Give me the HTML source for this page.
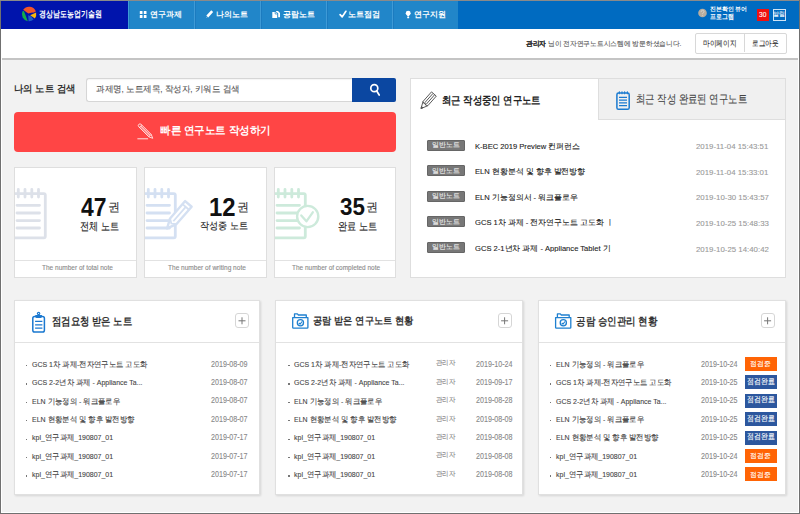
<!DOCTYPE html>
<html><head><meta charset="utf-8">
<style>
*{margin:0;padding:0;box-sizing:border-box}
html,body{width:800px;height:514px;overflow:hidden;background:#f2f2f2;font-family:"Liberation Sans",sans-serif;color:#333}
.a{position:absolute;white-space:nowrap;line-height:1}
#frame-l{left:0;top:0;width:1px;height:514px;background:#707070}
#frame-t{left:0;top:0;width:800px;height:1px;background:#8a8a8a}
#frame-r{left:799px;top:0;width:1px;height:514px;background:#707070}
#frame-b{left:0;top:513px;width:800px;height:1px;background:#707070}
#in-l{left:1px;top:29px;width:1px;height:484px;background:#fff}
#in-r{left:798px;top:29px;width:1px;height:484px;background:#fff}
#in-b{left:1px;top:512px;width:798px;height:1px;background:#fff}
#hdr{left:1px;top:1px;width:798px;height:28px;background:#006bc1}
#logo{left:1px;top:1px;width:127px;height:28px;background:#0014ac}
#nav{left:128px;top:1px;width:330px;height:28px;background:#2186c9}
.nv{position:absolute;top:0;height:28px;width:66px;border-left:1px solid #3e9ad6}
.nv:after{content:"";position:absolute;left:0;top:0;width:1px;height:28px;background:#1c7bbf}
#sub{left:1px;top:29px;width:797px;height:29px;background:#fff}
#subline{left:1px;top:58px;width:797px;height:2px;background:#c4c4c4}
.btngrp{left:694.5px;top:33px;width:92px;height:20.5px;border:1px solid #d8d8d8;border-radius:2px;background:#fff}
.search{left:86px;top:78px;width:267px;height:23.5px;background:#fff;border:1px solid #d6d6d6;border-right:none;border-radius:3px 0 0 3px;box-shadow:inset 0 1px 1px rgba(0,0,0,.04)}
.sbtn{left:352px;top:78px;width:44px;height:23.5px;background:#0b47a1;border-radius:0 2px 2px 0}
.redbtn{left:14px;top:111.5px;width:382px;height:40px;background:#ff4545;border-radius:4px}
.card{top:167px;width:123px;height:111px;background:#fff;border:1px solid #dedede;overflow:hidden}
.card .ftl{position:absolute;left:0;top:92px;width:121px;height:1px;background:#e2e2e2}
.rp{left:410px;top:78px;width:376px;height:200px;background:#fff;border:1px solid #dedede}
.tab2{left:598px;top:78px;width:188px;height:42px;background:#f0f0f0;border:1px solid #dedede}
.badge{position:absolute;left:427px;width:38px;height:11px;background:#777;border:1px solid #666;border-radius:1px}
.bp{top:300px;width:245px;height:195px;background:#fff;border:1px solid #e0e0e0;box-shadow:1px 1px 2px rgba(0,0,0,.12)}
.bp .hd{position:absolute;left:0;top:0;width:100%;height:42px;border-bottom:1px solid #e2e2e2}
.plus{position:absolute;top:313px;width:14px;height:15px;border:1px solid #d6d6d6;border-radius:3px;background:#fff}
.st{position:absolute;width:32px;height:14px}
.st.o{background:#ff6405}
.st.b{background:#2c579e}
.w{color:#fff}
.a{-webkit-text-stroke:0.1px currentColor}
.b{font-weight:bold;-webkit-text-stroke:0}
</style></head><body>
<div class="a" id="hdr"></div>
<div class="a" id="logo"></div>
<svg class="a" style="left:18px;top:4px" width="22" height="20" viewBox="18 4 22 20">
  <path d="M23.2 9.8 A7.2 7.2 0 0 1 35.9 11.6 L34 12.6 L31 12.8 L28.4 13.4 L26.5 12.2 Z" fill="#f2552a"/>
  <path d="M22.5 11.2 A7.2 7.2 0 0 0 27.8 21.2 L23.9 10.9 Z" fill="#14ad4a"/>
  <path d="M28.2 15.2 L28.6 21.3 A7.2 7.2 0 0 0 33.6 19.6 L31.2 16.6 Z" fill="#1f5fc4"/>
  <path d="M30.2 15.3 L36.1 12.6 A7.2 7.2 0 0 1 34.9 18.4 Z" fill="#fbb80a"/>
</svg>
<div class="a w b" id="t_logo" style="left:39.32px;top:9.72px;font-size:8.66px;transform:scaleX(0.7731);transform-origin:0 0">경상남도농업기술원</div>
<div class="a" id="nav">
  <div class="nv" style="left:0"></div><div class="nv" style="left:66px"></div><div class="nv" style="left:132px"></div><div class="nv" style="left:198px"></div><div class="nv" style="left:264px"></div>
</div>
<div class="a w b" id="t_nav1" style="left:150.48px;top:11.43px;font-size:7.71px;transform:scaleX(0.9981);transform-origin:0 0">연구과제</div>
<div class="a w b" id="t_nav2" style="left:216.38px;top:10.99px;font-size:7.64px;transform:scaleX(0.9980);transform-origin:0 0">나의노트</div>
<div class="a w b" id="t_nav3" style="left:282.74px;top:11.12px;font-size:7.62px;transform:scaleX(0.9934);transform-origin:0 0">공람노트</div>
<div class="a w b" id="t_nav4" style="left:347.55px;top:11.27px;font-size:7.64px;transform:scaleX(1.0096);transform-origin:0 0">노트점검</div>
<div class="a w b" id="t_nav5" style="left:414.25px;top:11.01px;font-size:7.66px;transform:scaleX(0.9976);transform-origin:0 0">연구지원</div>
<div class="a w b" id="t_help1" style="left:709.53px;top:6.40px;font-size:6.33px;transform:scaleX(0.9839);transform-origin:0 0">진본확인 뷰어</div>
<div class="a w b" id="t_help2" style="left:709.83px;top:13.70px;font-size:7.09px;transform:scaleX(0.8413);transform-origin:0 0">프로그램</div>
<div class="a" style="left:757px;top:9px;width:12px;height:12px;background:#f01010"></div>
<div class="a" style="left:773px;top:9px;width:13px;height:12px;border:1px solid #cfe3f5"></div>
<div class="a w" id="t_30" style="left:759.30px;top:11.21px;font-size:8.06px;transform:scaleX(0.8272);transform-origin:0 0">30</div>
<div class="a w" id="t_alarm" style="left:773.23px;top:11.34px;font-size:6.01px;transform:scaleX(0.9904);transform-origin:0 0">알림</div>

<div class="a" id="sub"></div>
<div class="a" id="subline"></div>
<div class="a" id="t_welcome" style="color:#555;left:525.77px;top:39.82px;font-size:7.03px;transform:scaleX(0.9596);transform-origin:0 0"><b style="color:#333">관리자</b> 님이 전자연구노트시스템에 방문하셨습니다.</div>
<div class="a btngrp"><div class="a" style="left:48px;top:0;width:1px;height:18px;background:#d8d8d8"></div></div>
<div class="a" id="t_mypage" style="color:#333;left:702.88px;top:39.55px;font-size:8.26px;transform:scaleX(0.8304);transform-origin:0 0">마이페이지</div>
<div class="a" id="t_logout" style="color:#333;left:751.94px;top:39.01px;font-size:8.37px;transform:scaleX(0.8143);transform-origin:0 0">로그아웃</div>

<div class="a b" id="t_lbl" style="color:#333;left:13.70px;top:83.87px;font-size:10.31px;transform:scaleX(0.9366);transform-origin:0 0">나의 노트 검색</div>
<div class="a search"></div>
<div class="a" id="t_ph" style="color:#555;left:95.96px;top:85.40px;font-size:8.51px;transform:scaleX(0.9474);transform-origin:0 0">과제명, 노트제목, 작성자, 키워드 검색</div>
<div class="a sbtn"></div>
<div class="a redbtn"></div>
<div class="a w b" id="t_red" style="left:159.70px;top:125.16px;font-size:10.70px;transform:scaleX(0.9558);transform-origin:0 0">빠른 연구노트 작성하기</div>

<div class="a card" style="left:14px"><div class="ftl"></div></div>
<div class="a card" style="left:144px"><div class="ftl"></div></div>
<div class="a card" style="left:274px;width:122px"><div class="ftl"></div></div>
<div class="a b" id="t_n1" style="color:#111;left:81.49px;top:194.51px;font-size:25.35px;transform:scaleX(0.9040);transform-origin:0 0">47</div>
<div class="a" id="t_u1" style="color:#333;left:107.83px;top:201.17px;font-size:12.11px;transform:scaleX(1.0000);transform-origin:0 0">권</div>
<div class="a" id="t_c1" style="color:#222;left:80.10px;top:221.05px;font-size:10.84px;transform:scaleX(0.8308);transform-origin:0 0">전체 노트</div>
<div class="a b" id="t_n2" style="color:#111;left:209.42px;top:195.31px;font-size:25.03px;transform:scaleX(0.9549);transform-origin:0 0">12</div>
<div class="a" id="t_u2" style="color:#333;left:237.12px;top:201.17px;font-size:12.11px;transform:scaleX(1.0000);transform-origin:0 0">권</div>
<div class="a" id="t_c2" style="color:#222;left:199.56px;top:221.11px;font-size:10.31px;transform:scaleX(0.9108);transform-origin:0 0">작성중 노트</div>
<div class="a b" id="t_n3" style="color:#111;left:339.71px;top:195.45px;font-size:24.80px;transform:scaleX(0.9033);transform-origin:0 0">35</div>
<div class="a" id="t_u3" style="color:#333;left:365.95px;top:201.17px;font-size:12.11px;transform:scaleX(1.0000);transform-origin:0 0">권</div>
<div class="a" id="t_c3" style="color:#222;left:337.65px;top:220.96px;font-size:10.84px;transform:scaleX(0.8377);transform-origin:0 0">완료 노트</div>
<div class="a" id="t_f1" style="color:#888;left:41.87px;top:264.29px;font-size:7.00px;transform:scaleX(0.9296);transform-origin:0 0">The number of total note</div>
<div class="a" id="t_f2" style="color:#888;left:167.85px;top:263.81px;font-size:7.00px;transform:scaleX(0.9349);transform-origin:0 0">The number of writing note</div>
<div class="a" id="t_f3" style="color:#888;left:292.26px;top:264.26px;font-size:7.00px;transform:scaleX(0.9242);transform-origin:0 0">The number of completed note</div>

<div class="a rp"></div>
<div class="a tab2"></div>
<div class="a b" id="t_tab1" style="color:#222;left:441.99px;top:95.09px;font-size:11.16px;transform:scaleX(0.8507);transform-origin:0 0">최근 작성중인 연구노트</div>
<div class="a" id="t_tab2" style="color:#444;left:635.50px;top:93.35px;font-size:11.72px;transform:scaleX(0.7822);transform-origin:0 0">최근 작성 완료된 연구노트</div>
<div class="badge" style="top:139.50px"></div>
<div class="a" id="t_bt0" style="color:#eee;left:431.53px;top:141.23px;font-size:7.30px;transform:scaleX(0.9805);transform-origin:0 0">일반노트</div>
<div class="a" id="t_rt0" style="color:#222;overflow:hidden;width:138.84px;left:474.68px;top:142.50px;font-size:7.68px;transform:scaleX(0.9891);transform-origin:0 0">K-BEC 2019 Preview 컨퍼런스</div>
<div class="a" id="t_rd0" style="color:#999;left:695.78px;top:143.30px;font-size:8.00px;transform:scaleX(0.9808);transform-origin:0 0">2019-11-04 15:43:51</div>
<div class="badge" style="top:165.05px"></div>
<div class="a" id="t_bt1" style="color:#eee;left:431.53px;top:166.78px;font-size:7.30px;transform:scaleX(0.9805);transform-origin:0 0">일반노트</div>
<div class="a" id="t_rt1" style="color:#222;overflow:hidden;width:138.84px;left:474.68px;top:168.05px;font-size:7.68px;transform:scaleX(0.9891);transform-origin:0 0">ELN 현황분석 및 향후 발전방향</div>
<div class="a" id="t_rd1" style="color:#999;left:695.78px;top:168.85px;font-size:8.00px;transform:scaleX(0.9808);transform-origin:0 0">2019-11-04 15:33:01</div>
<div class="badge" style="top:190.60px"></div>
<div class="a" id="t_bt2" style="color:#eee;left:431.53px;top:192.33px;font-size:7.30px;transform:scaleX(0.9805);transform-origin:0 0">일반노트</div>
<div class="a" id="t_rt2" style="color:#222;overflow:hidden;width:138.84px;left:474.68px;top:193.60px;font-size:7.68px;transform:scaleX(0.9891);transform-origin:0 0">ELN 기능정의서 - 워크플로우</div>
<div class="a" id="t_rd2" style="color:#999;left:695.78px;top:194.40px;font-size:8.00px;transform:scaleX(0.9808);transform-origin:0 0">2019-10-30 15:43:57</div>
<div class="badge" style="top:216.15px"></div>
<div class="a" id="t_bt3" style="color:#eee;left:431.53px;top:217.88px;font-size:7.30px;transform:scaleX(0.9805);transform-origin:0 0">일반노트</div>
<div class="a" id="t_rt3" style="color:#222;overflow:hidden;width:138.84px;left:474.68px;top:219.15px;font-size:7.68px;transform:scaleX(0.9891);transform-origin:0 0">GCS 1차 과제 - 전자연구노트 고도화 ㅣ</div>
<div class="a" id="t_rd3" style="color:#999;left:695.78px;top:219.95px;font-size:8.00px;transform:scaleX(0.9808);transform-origin:0 0">2019-10-25 15:48:33</div>
<div class="badge" style="top:241.70px"></div>
<div class="a" id="t_bt4" style="color:#eee;left:431.53px;top:243.43px;font-size:7.30px;transform:scaleX(0.9805);transform-origin:0 0">일반노트</div>
<div class="a" id="t_rt4" style="color:#222;overflow:hidden;width:138.84px;left:474.68px;top:244.70px;font-size:7.68px;transform:scaleX(0.9891);transform-origin:0 0">GCS 2-1년차 과제 - Appliance Tablet 기</div>
<div class="a" id="t_rd4" style="color:#999;left:695.78px;top:245.50px;font-size:8.00px;transform:scaleX(0.9808);transform-origin:0 0">2019-10-25 14:40:42</div>

<div class="a bp" style="left:14px;width:246px"><div class="hd"></div></div>
<div class="a bp" style="left:275px;width:248px"><div class="hd"></div></div>
<div class="a bp" style="left:538px;width:248px"><div class="hd"></div></div>
<div class="plus" style="left:235px"></div>
<div class="plus" style="left:498px"></div>
<div class="plus" style="left:761px"></div>
<div class="a b" id="t_p1" style="color:#333;left:52.25px;top:316.18px;font-size:10.76px;transform:scaleX(0.8514);transform-origin:0 0">점검요청 받은 노트</div>
<div class="a b" id="t_p2" style="color:#333;left:312.75px;top:316.38px;font-size:10.28px;transform:scaleX(0.9262);transform-origin:0 0">공람 받은 연구노트 현황</div>
<div class="a b" id="t_p3" style="color:#333;left:576.29px;top:316.24px;font-size:10.59px;transform:scaleX(0.8643);transform-origin:0 0">공람 승인관리 현황</div>
<div class="a" style="left:25.60px;top:365.00px;width:1.2px;height:1.2px;background:#777"></div>
<div class="a" id=t_li style="color:#444;left:31.67px;top:360.70px;font-size:7.62px;transform:scaleX(0.9191);transform-origin:0 0">GCS 1차 과제-전자연구노트 고도화</div>
<div class="a" id=t_ld style="color:#888;left:210.91px;top:360.67px;font-size:8.25px;transform:scaleX(0.8653);transform-origin:0 0">2019-08-09</div>
<div class="a" style="left:25.60px;top:383.40px;width:1.2px;height:1.2px;background:#777"></div>
<div class="a"  style="color:#444;left:31.67px;top:379.10px;font-size:7.62px;transform:scaleX(0.9191);transform-origin:0 0">GCS 2-2년차 과제 - Appliance Ta...</div>
<div class="a"  style="color:#888;left:210.91px;top:379.07px;font-size:8.25px;transform:scaleX(0.8653);transform-origin:0 0">2019-08-07</div>
<div class="a" style="left:25.60px;top:401.80px;width:1.2px;height:1.2px;background:#777"></div>
<div class="a"  style="color:#444;left:31.67px;top:397.50px;font-size:7.62px;transform:scaleX(0.9191);transform-origin:0 0">ELN 기능정의 - 워크플로우</div>
<div class="a"  style="color:#888;left:210.91px;top:397.47px;font-size:8.25px;transform:scaleX(0.8653);transform-origin:0 0">2019-08-07</div>
<div class="a" style="left:25.60px;top:420.20px;width:1.2px;height:1.2px;background:#777"></div>
<div class="a"  style="color:#444;left:31.67px;top:415.90px;font-size:7.62px;transform:scaleX(0.9191);transform-origin:0 0">ELN 현황분석 및 향후 발전방향</div>
<div class="a"  style="color:#888;left:210.91px;top:415.87px;font-size:8.25px;transform:scaleX(0.8653);transform-origin:0 0">2019-08-07</div>
<div class="a" style="left:25.60px;top:438.60px;width:1.2px;height:1.2px;background:#777"></div>
<div class="a"  style="color:#444;left:31.67px;top:434.30px;font-size:7.62px;transform:scaleX(0.9191);transform-origin:0 0">kpl_연구과제_190807_01</div>
<div class="a"  style="color:#888;left:210.91px;top:434.27px;font-size:8.25px;transform:scaleX(0.8653);transform-origin:0 0">2019-07-17</div>
<div class="a" style="left:25.60px;top:457.00px;width:1.2px;height:1.2px;background:#777"></div>
<div class="a"  style="color:#444;left:31.67px;top:452.70px;font-size:7.62px;transform:scaleX(0.9191);transform-origin:0 0">kpl_연구과제_190807_01</div>
<div class="a"  style="color:#888;left:210.91px;top:452.67px;font-size:8.25px;transform:scaleX(0.8653);transform-origin:0 0">2019-07-17</div>
<div class="a" style="left:25.60px;top:475.40px;width:1.2px;height:1.2px;background:#777"></div>
<div class="a"  style="color:#444;left:31.67px;top:471.10px;font-size:7.62px;transform:scaleX(0.9191);transform-origin:0 0">kpl_연구과제_190807_01</div>
<div class="a"  style="color:#888;left:210.91px;top:471.07px;font-size:8.25px;transform:scaleX(0.8653);transform-origin:0 0">2019-07-17</div>
<div class="a" style="left:288.40px;top:365.00px;width:1.2px;height:1.2px;background:#777"></div>
<div class="a" style="color:#444;left:294.48px;top:360.70px;font-size:7.62px;transform:scaleX(0.9191);transform-origin:0 0">GCS 1차 과제-전자연구노트 고도화</div>
<div class="a" id=t_la style="color:#888;left:436.26px;top:359.31px;font-size:7.24px;transform:scaleX(0.9232);transform-origin:0 0">관리자</div>
<div class="a" style="color:#888;left:475.61px;top:360.67px;font-size:8.25px;transform:scaleX(0.8653);transform-origin:0 0">2019-10-24</div>
<div class="a" style="left:288.40px;top:383.40px;width:1.2px;height:1.2px;background:#777"></div>
<div class="a" style="color:#444;left:294.48px;top:379.10px;font-size:7.62px;transform:scaleX(0.9191);transform-origin:0 0">GCS 2-2년차 과제 - Appliance Ta...</div>
<div class="a"  style="color:#888;left:436.26px;top:377.71px;font-size:7.24px;transform:scaleX(0.9232);transform-origin:0 0">관리자</div>
<div class="a" style="color:#888;left:475.61px;top:379.07px;font-size:8.25px;transform:scaleX(0.8653);transform-origin:0 0">2019-09-17</div>
<div class="a" style="left:288.40px;top:401.80px;width:1.2px;height:1.2px;background:#777"></div>
<div class="a" style="color:#444;left:294.48px;top:397.50px;font-size:7.62px;transform:scaleX(0.9191);transform-origin:0 0">ELN 기능정의 - 워크플로우</div>
<div class="a"  style="color:#888;left:436.26px;top:396.11px;font-size:7.24px;transform:scaleX(0.9232);transform-origin:0 0">관리자</div>
<div class="a" style="color:#888;left:475.61px;top:397.47px;font-size:8.25px;transform:scaleX(0.8653);transform-origin:0 0">2019-08-28</div>
<div class="a" style="left:288.40px;top:420.20px;width:1.2px;height:1.2px;background:#777"></div>
<div class="a" style="color:#444;left:294.48px;top:415.90px;font-size:7.62px;transform:scaleX(0.9191);transform-origin:0 0">ELN 현황분석 및 향후 발전방향</div>
<div class="a"  style="color:#888;left:436.26px;top:414.51px;font-size:7.24px;transform:scaleX(0.9232);transform-origin:0 0">관리자</div>
<div class="a" style="color:#888;left:475.61px;top:415.87px;font-size:8.25px;transform:scaleX(0.8653);transform-origin:0 0">2019-08-09</div>
<div class="a" style="left:288.40px;top:438.60px;width:1.2px;height:1.2px;background:#777"></div>
<div class="a" style="color:#444;left:294.48px;top:434.30px;font-size:7.62px;transform:scaleX(0.9191);transform-origin:0 0">kpl_연구과제_190807_01</div>
<div class="a"  style="color:#888;left:436.26px;top:432.91px;font-size:7.24px;transform:scaleX(0.9232);transform-origin:0 0">관리자</div>
<div class="a" style="color:#888;left:475.61px;top:434.27px;font-size:8.25px;transform:scaleX(0.8653);transform-origin:0 0">2019-08-08</div>
<div class="a" style="left:288.40px;top:457.00px;width:1.2px;height:1.2px;background:#777"></div>
<div class="a" style="color:#444;left:294.48px;top:452.70px;font-size:7.62px;transform:scaleX(0.9191);transform-origin:0 0">kpl_연구과제_190807_01</div>
<div class="a"  style="color:#888;left:436.26px;top:451.31px;font-size:7.24px;transform:scaleX(0.9232);transform-origin:0 0">관리자</div>
<div class="a" style="color:#888;left:475.61px;top:452.67px;font-size:8.25px;transform:scaleX(0.8653);transform-origin:0 0">2019-08-08</div>
<div class="a" style="left:288.40px;top:475.40px;width:1.2px;height:1.2px;background:#777"></div>
<div class="a" style="color:#444;left:294.48px;top:471.10px;font-size:7.62px;transform:scaleX(0.9191);transform-origin:0 0">kpl_연구과제_190807_01</div>
<div class="a"  style="color:#888;left:436.26px;top:469.71px;font-size:7.24px;transform:scaleX(0.9232);transform-origin:0 0">관리자</div>
<div class="a" style="color:#888;left:475.61px;top:471.07px;font-size:8.25px;transform:scaleX(0.8653);transform-origin:0 0">2019-08-08</div>
<div class="a" style="left:550.20px;top:365.00px;width:1.2px;height:1.2px;background:#777"></div>
<div class="a" style="color:#444;left:556.27px;top:360.70px;font-size:7.62px;transform:scaleX(0.9191);transform-origin:0 0">ELN 기능정의 - 워크플로우</div>
<div class="a" style="color:#888;left:700.61px;top:360.67px;font-size:8.25px;transform:scaleX(0.8653);transform-origin:0 0">2019-10-24</div>
<div class="st o" style="left:745px;top:357.00px"></div>
<div class="a w" id=t_sto style="left:749.72px;top:361.15px;font-size:6.73px;transform:scaleX(0.9684);transform-origin:0 0">점검중</div>
<div class="a" style="left:550.20px;top:383.40px;width:1.2px;height:1.2px;background:#777"></div>
<div class="a" style="color:#444;left:556.27px;top:379.10px;font-size:7.62px;transform:scaleX(0.9191);transform-origin:0 0">GCS 1차 과제-전자연구노트 고도화</div>
<div class="a" style="color:#888;left:700.61px;top:379.07px;font-size:8.25px;transform:scaleX(0.8653);transform-origin:0 0">2019-10-25</div>
<div class="st b" style="left:745px;top:375.40px"></div>
<div class="a w" id=t_stb style="left:746.97px;top:377.89px;font-size:7.63px;transform:scaleX(0.8583);transform-origin:0 0">점검완료</div>
<div class="a" style="left:550.20px;top:401.80px;width:1.2px;height:1.2px;background:#777"></div>
<div class="a" style="color:#444;left:556.27px;top:397.50px;font-size:7.62px;transform:scaleX(0.9191);transform-origin:0 0">GCS 2-2년차 과제 - Appliance Ta...</div>
<div class="a" style="color:#888;left:700.61px;top:397.47px;font-size:8.25px;transform:scaleX(0.8653);transform-origin:0 0">2019-10-25</div>
<div class="st b" style="left:745px;top:393.80px"></div>
<div class="a w"  style="left:746.97px;top:396.29px;font-size:7.63px;transform:scaleX(0.8583);transform-origin:0 0">점검완료</div>
<div class="a" style="left:550.20px;top:420.20px;width:1.2px;height:1.2px;background:#777"></div>
<div class="a" style="color:#444;left:556.27px;top:415.90px;font-size:7.62px;transform:scaleX(0.9191);transform-origin:0 0">ELN 기능정의 - 워크플로우</div>
<div class="a" style="color:#888;left:700.61px;top:415.87px;font-size:8.25px;transform:scaleX(0.8653);transform-origin:0 0">2019-10-25</div>
<div class="st b" style="left:745px;top:412.20px"></div>
<div class="a w"  style="left:746.97px;top:414.69px;font-size:7.63px;transform:scaleX(0.8583);transform-origin:0 0">점검완료</div>
<div class="a" style="left:550.20px;top:438.60px;width:1.2px;height:1.2px;background:#777"></div>
<div class="a" style="color:#444;left:556.27px;top:434.30px;font-size:7.62px;transform:scaleX(0.9191);transform-origin:0 0">ELN 현황분석 및 향후 발전방향</div>
<div class="a" style="color:#888;left:700.61px;top:434.27px;font-size:8.25px;transform:scaleX(0.8653);transform-origin:0 0">2019-10-25</div>
<div class="st b" style="left:745px;top:430.60px"></div>
<div class="a w"  style="left:746.97px;top:433.09px;font-size:7.63px;transform:scaleX(0.8583);transform-origin:0 0">점검완료</div>
<div class="a" style="left:550.20px;top:457.00px;width:1.2px;height:1.2px;background:#777"></div>
<div class="a" style="color:#444;left:556.27px;top:452.70px;font-size:7.62px;transform:scaleX(0.9191);transform-origin:0 0">kpl_연구과제_190807_01</div>
<div class="a" style="color:#888;left:700.61px;top:452.67px;font-size:8.25px;transform:scaleX(0.8653);transform-origin:0 0">2019-10-24</div>
<div class="st o" style="left:745px;top:449.00px"></div>
<div class="a w"  style="left:749.72px;top:453.15px;font-size:6.73px;transform:scaleX(0.9684);transform-origin:0 0">점검중</div>
<div class="a" style="left:550.20px;top:475.40px;width:1.2px;height:1.2px;background:#777"></div>
<div class="a" style="color:#444;left:556.27px;top:471.10px;font-size:7.62px;transform:scaleX(0.9191);transform-origin:0 0">kpl_연구과제_190807_01</div>
<div class="a" style="color:#888;left:700.61px;top:471.07px;font-size:8.25px;transform:scaleX(0.8653);transform-origin:0 0">2019-10-24</div>
<div class="st o" style="left:745px;top:467.40px"></div>
<div class="a w"  style="left:749.72px;top:471.55px;font-size:6.73px;transform:scaleX(0.9684);transform-origin:0 0">점검중</div>


<!-- ICONS -->
<svg class="a" style="left:0;top:0" width="800" height="514" viewBox="0 0 800 514">
  <!-- nav grid -->
  <g fill="#fff">
    <rect x="139.8" y="11" width="2.7" height="3" rx="0.3"/><rect x="143.8" y="11" width="2.7" height="3" rx="0.3"/>
    <rect x="139.8" y="15" width="2.7" height="3" rx="0.3"/><rect x="143.8" y="15" width="2.7" height="3" rx="0.3"/>
  </g>
  <!-- nav pencil -->
  <path d="M207.3 16.5 L212.2 11.2" stroke="#fff" stroke-width="2.6" stroke-linecap="butt"/>
  <path d="M206 17.9 L207 16.4 L207.6 17.1 Z" fill="#d9ebf8"/>
  <!-- nav copy -->
  <path d="M272.3 12 H275.6 L277.2 13.6 V18.1 H272.3 Z" fill="#fff"/>
  <path d="M275.8 11.1 H278 L280 13 V17.2 H278.2 V13.2 L276.2 11.8 Z" fill="#fff"/>
  <path d="M275.2 12 V14 H277.2" stroke="#2186c9" stroke-width="0.7" fill="none"/>
  <!-- nav check -->
  <path d="M340.1 14.6 L342.2 16.9 L345.9 11.3" stroke="#fff" stroke-width="1.7" fill="none" stroke-linecap="round" stroke-linejoin="round"/>
  <!-- nav bulb -->
  <circle cx="408.2" cy="13.3" r="2.45" fill="#fff"/>
  <path d="M406.9 14.5 L409.5 14.5 L408.8 16.4 L407.6 16.4 Z" fill="#fff"/>
  <rect x="407.2" y="16.8" width="2" height="1.4" rx="0.5" fill="#fff"/>
  <!-- help -->
  <circle cx="702.5" cy="13" r="4.3" fill="#b8ada0"/>
  <path d="M701.1 11.9 Q701.2 10.3 702.6 10.3 Q704 10.4 704 11.6 Q704 12.4 703.1 12.9 Q702.6 13.2 702.6 14" stroke="#d8d2ca" stroke-width="1" fill="none"/>
  <circle cx="702.6" cy="15.3" r="0.55" fill="#d8d2ca"/>
  <!-- search -->
  <circle cx="374.3" cy="88.2" r="3.5" stroke="#fff" stroke-width="1.7" fill="none"/>
  <path d="M376.6 90.8 L379.2 95" stroke="#fff" stroke-width="1.7" stroke-linecap="round"/>
  <!-- red btn pencil -->
  <g transform="translate(139.7 125.3) rotate(-45)" stroke="#fff" stroke-width="0.75" fill="none">
    <path d="M-1.7 0.6 Q-1.7 -1.3 0 -1.3 Q1.7 -1.3 1.7 0.6 V14.6 L0 18.4 L-1.7 14.6 Z"/>
    <path d="M-0.55 1.4 V14.4" /><path d="M0.55 1.4 V14.4"/>
    <path d="M-1.7 1.3 H1.7"/><path d="M-1.7 14.6 H1.7"/>
  </g>
  <path d="M137.4 138.8 H148.1" stroke="#fff" stroke-width="1" opacity="0.85"/>
  <!-- tab pencil -->
  <g transform="translate(433.9 94) rotate(41.5)" stroke="#555" stroke-width="0.9" fill="none">
    <path d="M-3.2 0 H3.2 V12.8 L0 19.4 L-3.2 12.8 Z"/>
    <path d="M-1.05 0.3 V12.8"/><path d="M1.05 0.3 V12.8"/>
    <path d="M-3.2 12.8 L-1.05 13.8 L0 12.8 L1.05 13.8 L3.2 12.8"/>
    <path d="M-0.9 17.6 L0 19.4 L0.9 17.6 Z" fill="#555"/>
  </g>
  <!-- tab notepad -->
  <g stroke="#1a7ad0" fill="none">
    <rect x="616.9" y="93.1" width="12.3" height="16.2" rx="1.6" stroke-width="1.5"/>
    <path d="M619 97.3 H627 M619 100.1 H627 M619 102.9 H627 M619 105.6 H627" stroke-width="1.2"/>
  </g>
  <g fill="#1a7ad0"><ellipse cx="619.3" cy="92.7" rx="0.6" ry="1.7"/><ellipse cx="622" cy="92.7" rx="0.6" ry="1.7"/><ellipse cx="624.7" cy="92.7" rx="0.6" ry="1.7"/><ellipse cx="627.3" cy="92.7" rx="0.6" ry="1.7"/></g>
  <!-- clipboard -->
  <g stroke="#1a78d0" fill="none">
    <rect x="32.8" y="316.4" width="11.6" height="15.6" rx="1.8" stroke-width="1.5"/>
    <path d="M35.1 321.4 H42.4 M35.1 324.9 H42.4 M35.1 328.2 H42.4" stroke-width="1.2"/>
  </g>
  <path d="M35.3 315 H41.9 V316.5 Q41.9 318 40.4 318 H36.8 Q35.3 318 35.3 316.5 Z" fill="#1a78d0"/>
  <circle cx="38.6" cy="313.5" r="1.7" fill="#1a78d0"/><circle cx="38.6" cy="313.5" r="0.6" fill="#fff"/>
  <!-- folders -->
  <g id="fold" stroke="#1f80d0" stroke-width="1.3" fill="none" stroke-linejoin="round">
    <path d="M294.5 317.2 V313.9 H297.4 L298.4 315 H306.3 V317.2"/>
    <path d="M292.7 317.6 H307.9 V327.4 Q307.9 328.2 307.1 328.2 H293.5 Q292.7 328.2 292.7 327.4 Z"/>
    <circle cx="300.4" cy="322.8" r="3.1"/>
    <path d="M298.8 322.9 L300.1 324.1 L302.1 321.5" stroke-width="1.1"/>
  </g>
  <use href="#fold" transform="translate(262.9 0)"/>
  <!-- plus signs -->
  <g stroke="#777" stroke-width="1">
    <path d="M238.5 320.8 H245.5 M242 317.3 V324.3"/>
    <path d="M501.1 320.8 H508.1 M504.6 317.3 V324.3"/>
    <path d="M764.1 320.8 H771.1 M767.6 317.3 V324.3"/>
  </g>
</svg>
<!-- card icons -->
<svg class="a" style="left:15px;top:168px" width="121" height="90" viewBox="15 168 121 90">
  <g stroke="#dde1e9" stroke-width="2.8" fill="none" stroke-linecap="round">
    <path d="M10 193.6 H43.8 Q45.3 193.6 45.3 195.1 V236.3 Q45.3 237.8 43.8 237.8 H10"/>
    <path d="M18.3 189.3 V197 M25 189.3 V197 M31.8 189.3 V197 M38.5 189.3 V197"/>
    <path d="M17 205.3 H39.5 M17 213 H39.5 M17 220.6 H39.5 M17 228 H39.5" stroke-width="2.8"/>
  </g>
</svg>
<svg class="a" style="left:145px;top:168px" width="121" height="90" viewBox="145 168 121 90">
  <g stroke="#d4e0f2" stroke-width="2.8" fill="none" stroke-linecap="round">
    <path d="M140 193.6 H173.8 Q175.3 193.6 175.3 195.1 V236.3 Q175.3 237.8 173.8 237.8 H140"/>
    <path d="M148.3 189.3 V197 M155 189.3 V197 M161.8 189.3 V197 M168.5 189.3 V197"/>
    <path d="M147 205.3 H169.5 M147 213 H169.5 M147 220.6 H169.5 M147 228 H169.5"/>
  </g>
  <g transform="translate(188.4 203.9) rotate(41)">
    <path d="M-4.3 0 H4.3 V23 L0 32.5 L-4.3 23 Z" fill="#fff" stroke="#d4e0f2" stroke-width="2.4" stroke-linejoin="round"/>
    <path d="M-4.3 4 H4.3 M0 4 V23" stroke="#d4e0f2" stroke-width="1.8" fill="none"/>
    <path d="M-4.3 23 L0 26 L4.3 23" stroke="#d4e0f2" stroke-width="1.8" fill="none"/>
  </g>
</svg>
<svg class="a" style="left:275px;top:168px" width="121" height="90" viewBox="275 168 121 90">
  <g stroke="#cdeadb" stroke-width="2.8" fill="none" stroke-linecap="round">
    <path d="M270 193.6 H303.8 Q305.3 193.6 305.3 195.1 V236.3 Q305.3 237.8 303.8 237.8 H270"/>
    <path d="M278.3 189.3 V197 M285 189.3 V197 M291.8 189.3 V197 M298.5 189.3 V197"/>
    <path d="M277 205.3 H299.5 M277 213 H299.5 M277 220.6 H299.5 M277 228 H299.5"/>
  </g>
  <circle cx="307.7" cy="216.5" r="10.6" fill="#fff" stroke="#cdeadb" stroke-width="2.4"/>
  <path d="M301.3 215.4 L306.4 221.3 L312.8 212.3" stroke="#cdeadb" stroke-width="2.3" fill="none" stroke-linecap="round" stroke-linejoin="round"/>
</svg>

<div class="a" id="frame-l"></div><div class="a" id="frame-t"></div>
<div class="a" id="frame-r"></div><div class="a" id="frame-b"></div>
<div class="a" id="in-l"></div><div class="a" id="in-r"></div><div class="a" id="in-b"></div>
</body></html>
